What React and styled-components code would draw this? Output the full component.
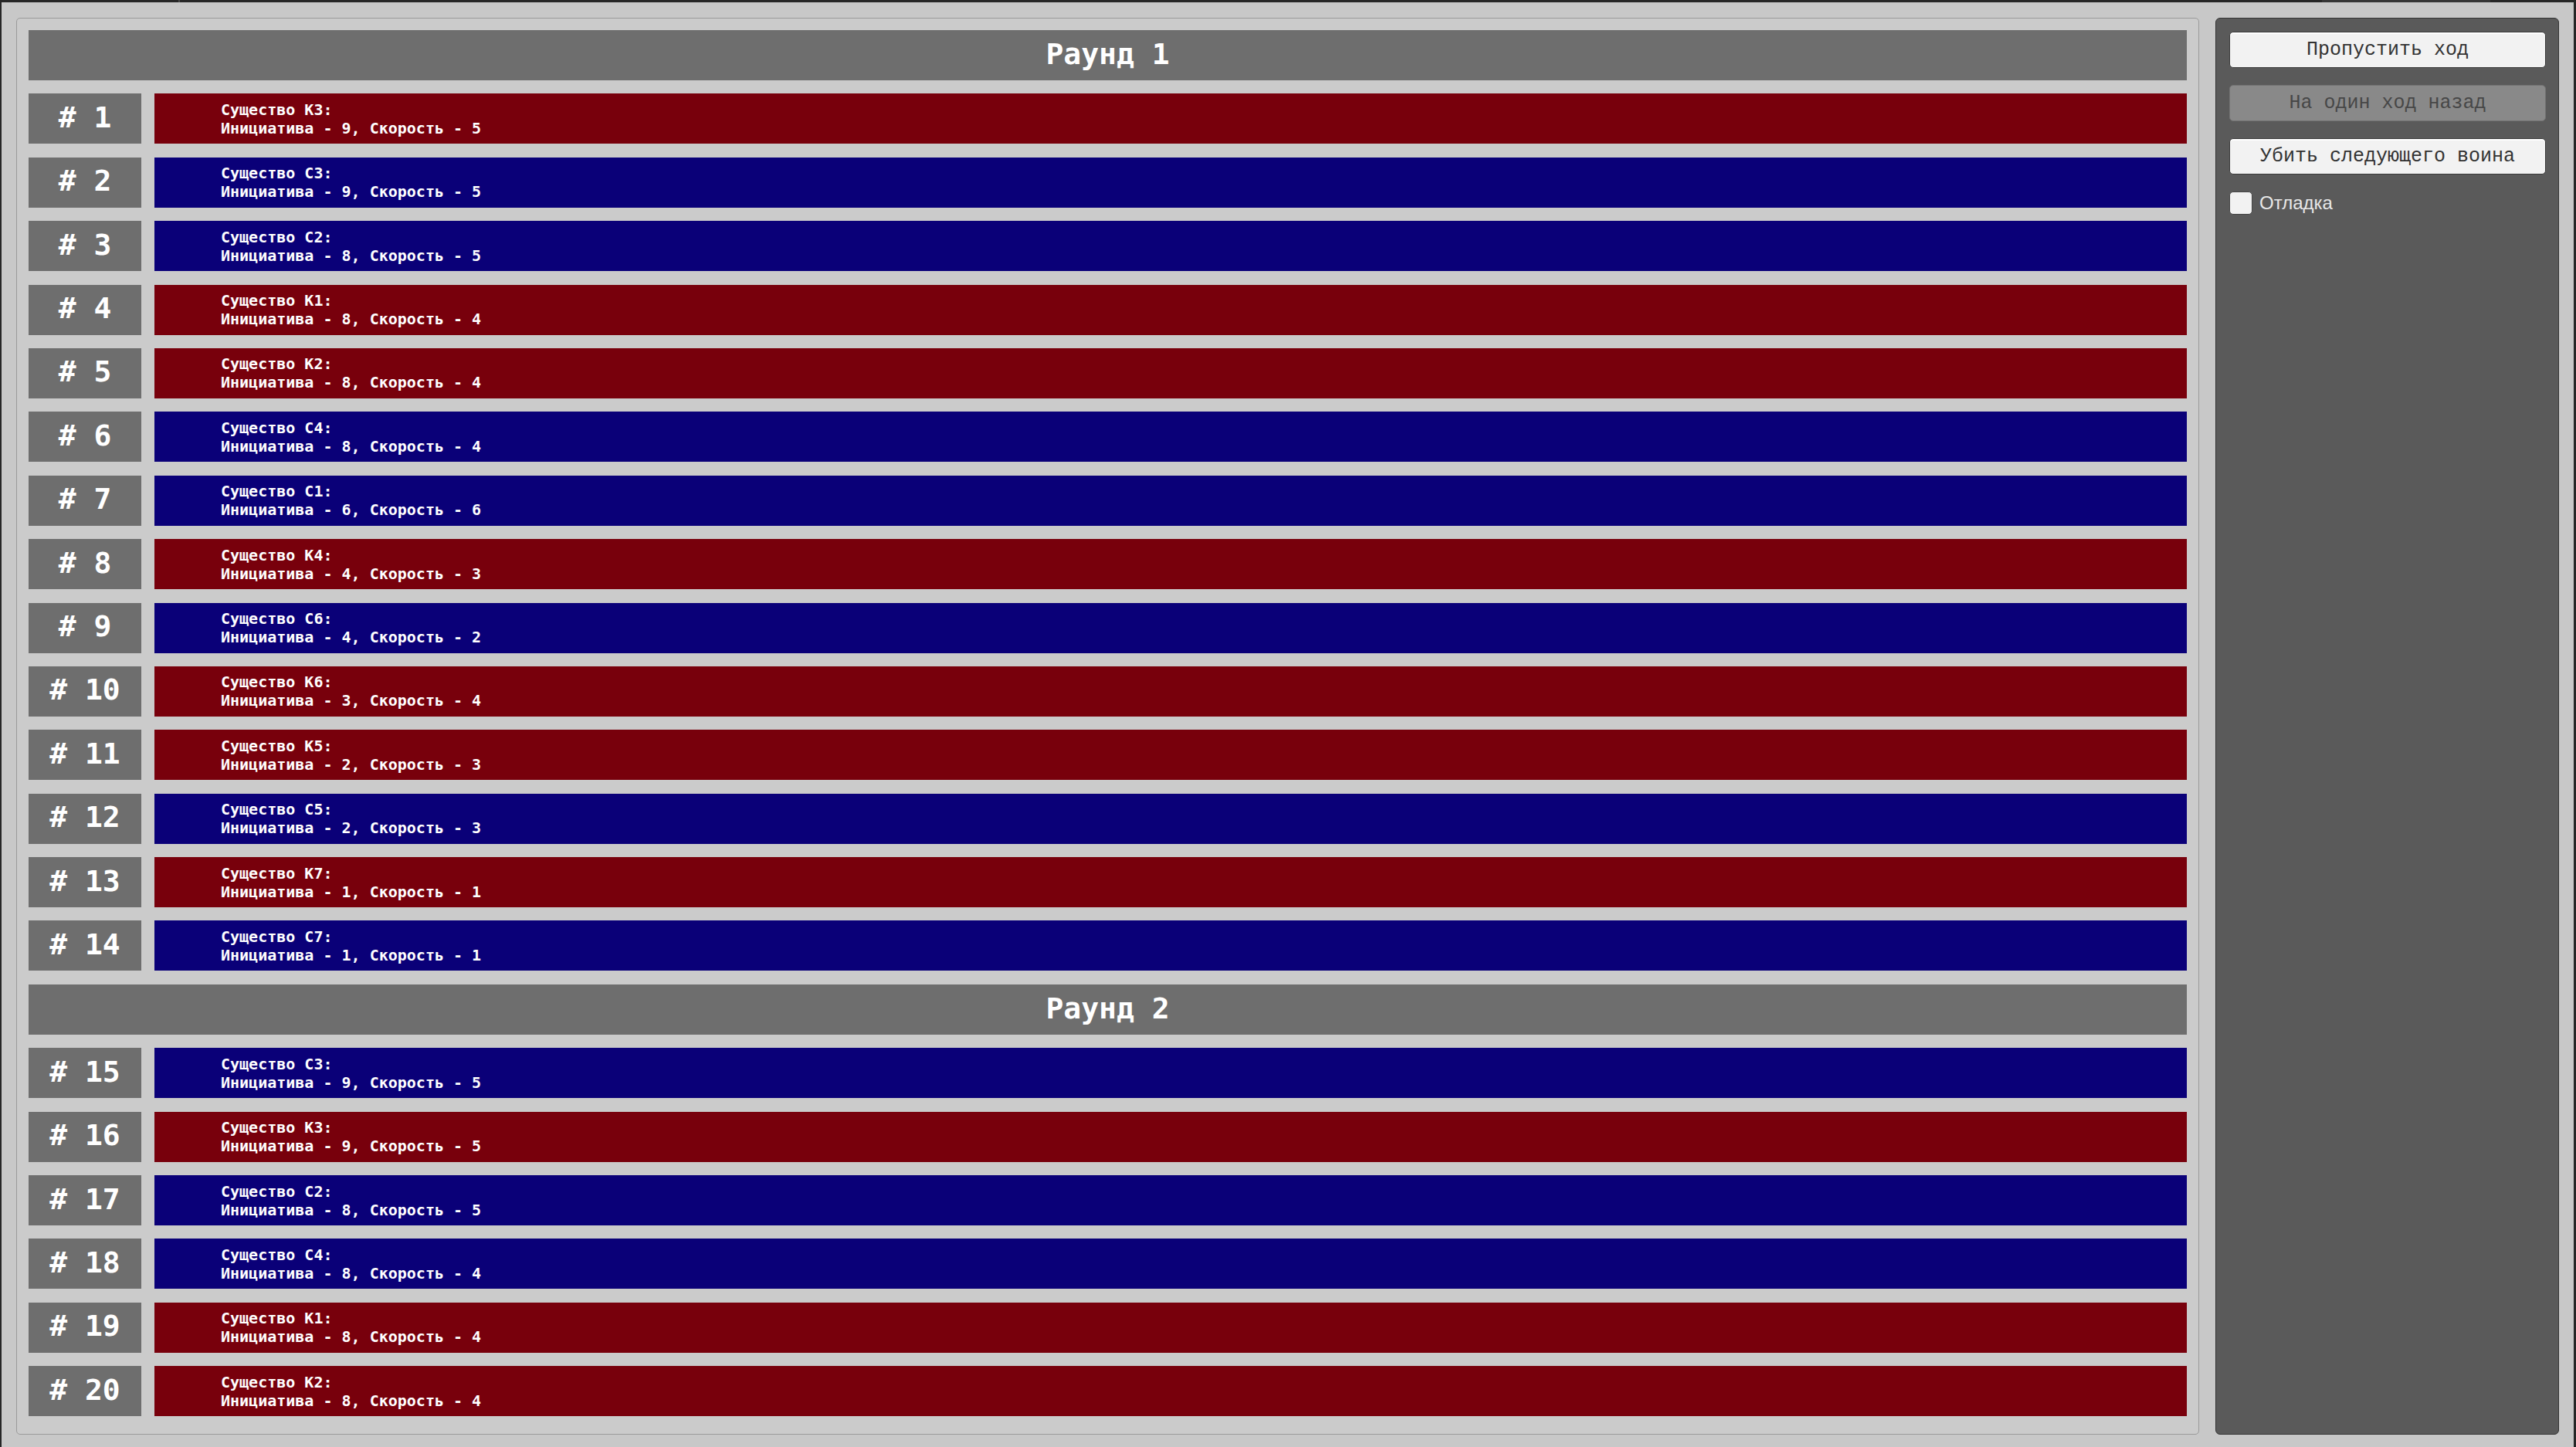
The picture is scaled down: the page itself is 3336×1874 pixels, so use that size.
import React from 'react'
import styled, { createGlobalStyle } from 'styled-components'

const GlobalStyle = createGlobalStyle`
    html, body {
        margin: 0;
        padding: 0;
        background: #c8c8c8;
    }
    #root {
        height: 100vh;
    }
    * {
        box-sizing: border-box;
    }
`

const Frame = styled.div`
    height: 100vh;
    display: flex;
    flex-direction: column;
    border-left: 2px solid #262626;
    border-right: 3px solid #262626;
    background: #c8c8c8;
`

const TopStrip = styled.div`
    height: 3px;
    display: flex;
    flex-shrink: 0;
    background: #272727;
`

const StripPart = styled.div`
    width: ${p => p.w}px;
    flex: ${p => (p.grow ? 1 : 'none')};
    background: ${p => p.color || '#272727'};
`

const Main = styled.div`
    flex: 1;
    min-height: 0;
    display: flex;
    gap: 21px;
    padding: 20px 19px 16px 19px;
`

const QueuePanel = styled.div`
    flex: 1;
    min-width: 0;
    display: flex;
    flex-direction: column;
    gap: 17.4px;
    padding: 15px;
    background: #cbcbcb;
    border: 1px solid #9a9a9a;
    border-radius: 5px;
    overflow: hidden;
`

const RoundHeader = styled.div`
    height: 65px;
    flex-shrink: 0;
    display: flex;
    align-items: center;
    justify-content: center;
    padding-bottom: 3px;
    background: #6e6e6e;
    color: #ffffff;
    font-family: "DejaVu Sans Mono", monospace;
    font-weight: bold;
    font-size: 38px;
    white-space: pre;
`

const Row = styled.div`
    height: 65px;
    flex-shrink: 0;
    display: flex;
    gap: 17px;
`

const TurnNumber = styled.div`
    width: 146px;
    display: flex;
    align-items: center;
    justify-content: center;
    padding-bottom: 4px;
    background: #6e6e6e;
    color: #ffffff;
    font-family: "DejaVu Sans Mono", monospace;
    font-weight: bold;
    font-size: 38px;
    white-space: pre;
`

const CreatureBar = styled.div`
    flex: 1;
    display: flex;
    flex-direction: column;
    justify-content: center;
    padding-left: 86px;
    background: ${p => (p.team === 'red' ? '#78000c' : '#0a0078')};
    color: #ffffff;
    font-family: "DejaVu Sans Mono", monospace;
    font-weight: bold;
    font-size: 20px;
    line-height: normal;
    white-space: pre;
`

const Sidebar = styled.div`
    width: 445px;
    flex-shrink: 0;
    display: flex;
    flex-direction: column;
    gap: 22px;
    padding: 17px 16px 0 17px;
    background: #5a5a5a;
    border: 1px solid #333333;
    border-radius: 6px;
`

const ActionButton = styled.button`
    height: 47px;
    width: 100%;
    padding: 0;
    background: ${p => (p.disabled ? '#898989' : '#f2f2f2')};
    color: ${p => (p.disabled ? '#474747' : '#333333')};
    border: 1px solid ${p => (p.disabled ? '#737373' : '#3a3a3a')};
    border-radius: 5px;
    box-shadow: ${p => (p.disabled ? 'none' : 'inset 0 2px 0 #ffffff')};
    font-family: "Liberation Mono", monospace;
    font-size: 25px;
    cursor: pointer;
`

const DebugToggle = styled.label`
    display: flex;
    align-items: center;
    gap: 9px;
    height: 30px;
    color: #e8e8e8;
    font-family: "Liberation Sans", Arial, sans-serif;
    font-size: 24px;
`

const CheckBox = styled.input`
    appearance: none;
    margin: 0;
    width: 30px;
    height: 30px;
    background: #f2f2f2;
    border: 1px solid #474747;
    border-radius: 5px;
`

const rounds = [
    {
        title: 'Раунд 1',
        turns: [
            ['К3', 9, 5], ['С3', 9, 5], ['С2', 8, 5], ['К1', 8, 4], ['К2', 8, 4],
            ['С4', 8, 4], ['С1', 6, 6], ['К4', 4, 3], ['С6', 4, 2], ['К6', 3, 4],
            ['К5', 2, 3], ['С5', 2, 3], ['К7', 1, 1], ['С7', 1, 1],
        ],
    },
    {
        title: 'Раунд 2',
        turns: [
            ['С3', 9, 5], ['К3', 9, 5], ['С2', 8, 5], ['С4', 8, 4], ['К1', 8, 4],
            ['К2', 8, 4],
        ],
    },
]

function App() {
    let counter = 0

    return (
        <>
            <GlobalStyle />
            <Frame>
                <TopStrip>
                    <StripPart w={229} />
                    <StripPart w={2} color="#4a4a4a" />
                    <StripPart grow />
                    <StripPart w={218} color="#363636" />
                    <StripPart w={108} />
                </TopStrip>
                <Main>
                    <QueuePanel>
                        {rounds.map(round => (
                            <React.Fragment key={round.title}>
                                <RoundHeader>{round.title}</RoundHeader>
                                {round.turns.map(([name, init, speed]) => {
                                    counter += 1
                                    // К - красные, С - синие
                                    const team = name[0] === 'К' ? 'red' : 'blue'
                                    return (
                                        <Row key={counter}>
                                            <TurnNumber>{`# ${counter}`}</TurnNumber>
                                            <CreatureBar team={team}>
                                                <span>{`Существо ${name}:`}</span>
                                                <span>{`Инициатива - ${init}, Скорость - ${speed}`}</span>
                                            </CreatureBar>
                                        </Row>
                                    )
                                })}
                            </React.Fragment>
                        ))}
                    </QueuePanel>
                    <Sidebar>
                        <ActionButton>Пропустить ход</ActionButton>
                        <ActionButton disabled>На один ход назад</ActionButton>
                        <ActionButton>Убить следующего воина</ActionButton>
                        <DebugToggle>
                            <CheckBox type="checkbox" />
                            Отладка
                        </DebugToggle>
                    </Sidebar>
                </Main>
            </Frame>
        </>
    )
}

export default App
